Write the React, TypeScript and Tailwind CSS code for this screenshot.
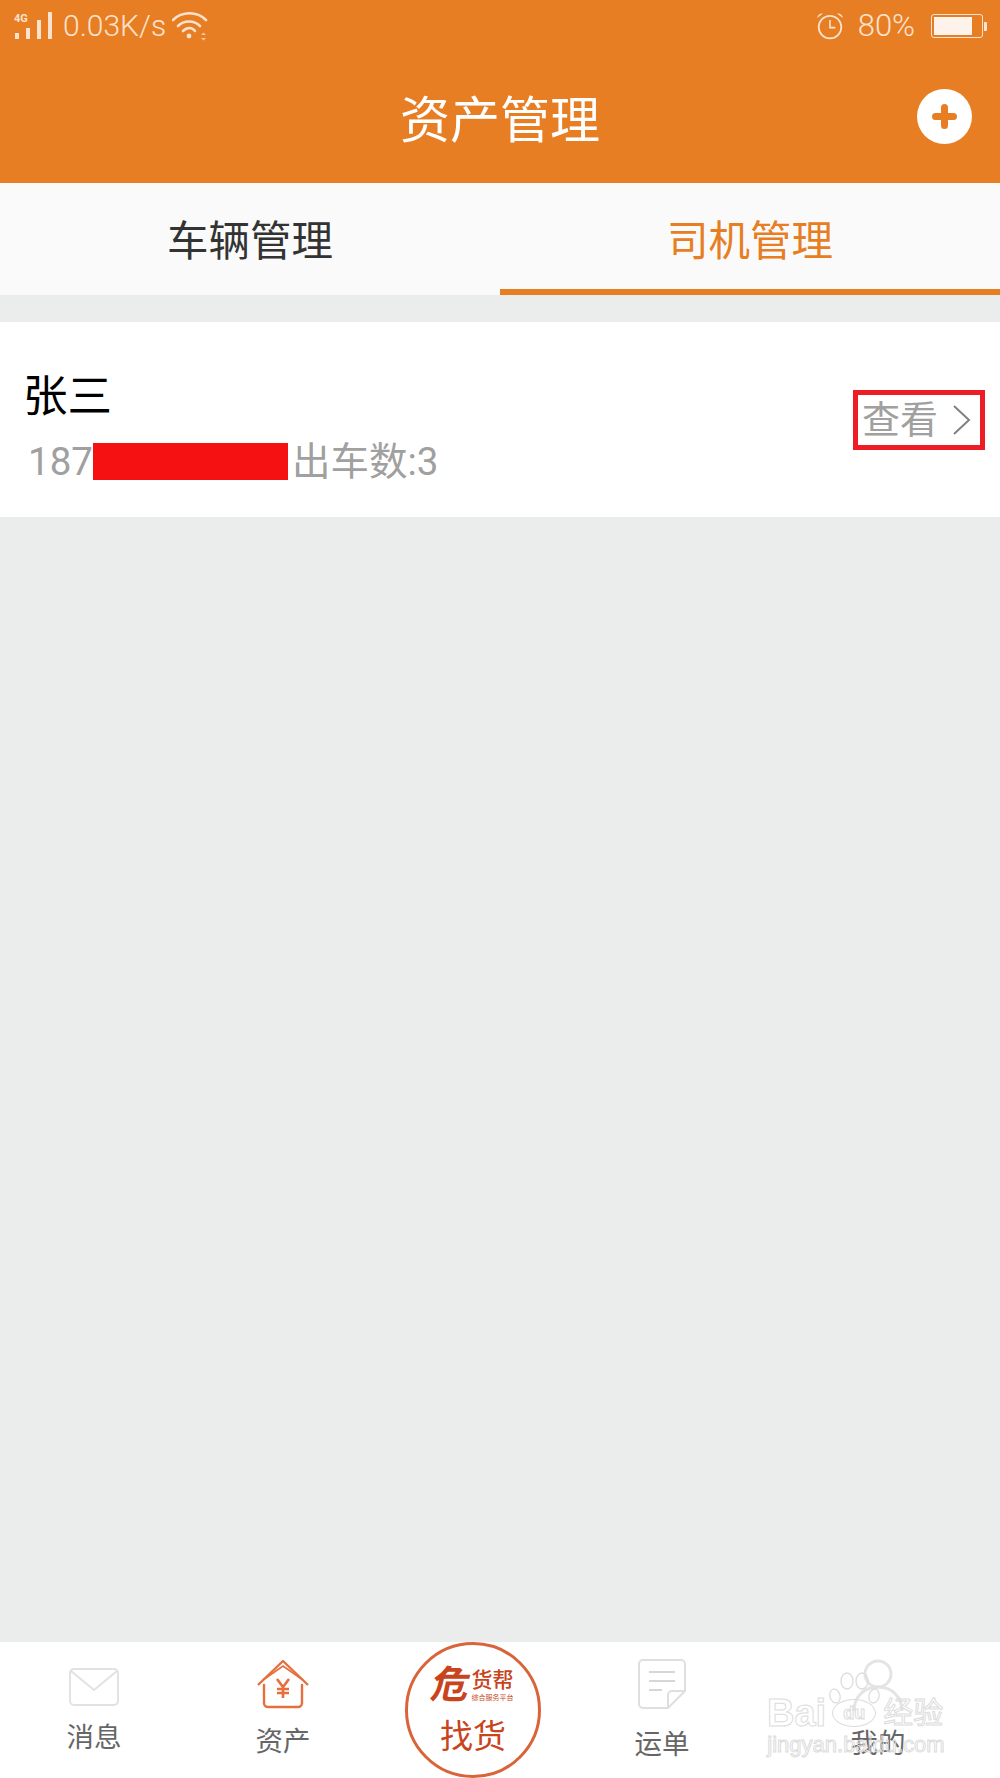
const cjk = "font-['Roboto','Noto_Sans_CJK_SC',sans-serif]";

function SignalIcon() {
  return (
    <svg width="40" height="28" viewBox="0 0 40 28" fill="#fbe3cf">
      <text x="0" y="10" fontSize="11" fontWeight="700" fontFamily="Roboto, sans-serif">4G</text>
      <rect x="1" y="21" width="4" height="6" />
      <rect x="12" y="16" width="4" height="11" />
      <rect x="23" y="8" width="4" height="19" />
      <rect x="34" y="0" width="4" height="27" />
    </svg>
  );
}

function WifiIcon() {
  return (
    <svg width="36" height="30" viewBox="0 0 36 30" fill="none" stroke="#fbe3cf" strokeWidth="2.6" strokeLinecap="round">
      <path d="M1 9C10 0 25 0 34 9" />
      <path d="M6 15C12 9 22 9 28 15" />
      <path d="M11 20C15 16 20 16 23 20" />
      <circle cx="17" cy="25" r="2.4" fill="#fbe3cf" stroke="none" />
      <path d="M29 24h5l-2.500-2.500zM29 27h5l-2.500 2.500z" fill="#f5c9a4" stroke="none" />
    </svg>
  );
}

function AlarmIcon() {
  return (
    <svg width="28" height="28" viewBox="0 0 26 26" fill="none" stroke="#fbe3cf" strokeWidth="1.600">
      <circle cx="13" cy="14" r="10.500" />
      <path d="M13 7.500v7h5" strokeWidth="1.500" />
      <path d="M1 5.500C1.500 2.500 4 1 6.500 1.500zM25 5.500C24.500 2.500 22 1 19.500 1.500z" fill="#fbe3cf" stroke="none" />
    </svg>
  );
}

function BatteryIcon() {
  return (
    <div className="flex items-center">
      <div className="flex h-[24px] w-[52px] rounded-[3px] border-[1.500px] border-[#fbe3cf] p-[2px]">
        <div className="h-full w-[38px] bg-[#fdf3ea]" />
      </div>
      <div className="ml-[1px] h-[9px] w-[3px] rounded-r-[1px] bg-[#fbe3cf]" />
    </div>
  );
}

function PlusButton() {
  return (
    <button className="flex h-[55px] w-[55px] items-center justify-center rounded-full bg-white">
      <svg width="25" height="25" viewBox="0 0 25 25" stroke="#e77e23" strokeWidth="7" strokeLinecap="round">
        <path d="M12.500 3.500v18M3.500 12.500h18" />
      </svg>
    </button>
  );
}

function MailIcon() {
  return (
    <svg width="50" height="38" viewBox="0 0 50 38" fill="none" stroke="#e2e2e2" strokeWidth="2">
      <rect x="1" y="1" width="48" height="36" rx="4" />
      <path d="M2 3l23 19L48 3" />
    </svg>
  );
}

function HouseIcon() {
  return (
    <svg width="52" height="50" viewBox="0 0 52 50" fill="none" stroke="#e66f3d" strokeWidth="2.400">
      <path d="M1 25L26 1l25 24" strokeLinejoin="round" />
      <path d="M6 20L26 6l20 14" strokeWidth="1.800" />
      <path d="M7 25v18a4 4 0 0 0 4 4h30a4 4 0 0 0 4-4V25" strokeLinecap="round" />
      <path d="M20 19l6 8 6-8M26 27v11M20 29h12M20 33h12" strokeWidth="2.600" />
    </svg>
  );
}

function WaybillIcon() {
  return (
    <svg width="48" height="50" viewBox="0 0 48 50" fill="none" stroke="#dfdfdf" strokeWidth="2">
      <path d="M30 49H5a4 4 0 0 1-4-4V5a4 4 0 0 1 4-4h38a4 4 0 0 1 4 4v27z" />
      <path d="M30 49V36a4 4 0 0 1 4-4h13" />
      <path d="M11 13h26M11 22h26M11 31h13" strokeWidth="2.200" stroke="#d6d6d6" />
    </svg>
  );
}

function PersonIcon() {
  return (
    <svg width="56" height="54" viewBox="0 0 56 54" fill="none" stroke="#e4e4e4" strokeWidth="3">
      <circle cx="28" cy="15" r="13" />
      <path d="M4 52c0-14 10-24 24-24s24 10 24 24" />
    </svg>
  );
}

function PawToes() {
  return (
    <svg width="52" height="34" viewBox="0 0 52 34" fill="none" stroke="#dcdcdc" strokeWidth="1.300">
      <ellipse cx="6" cy="24" rx="5" ry="7" transform="rotate(-15 6 24)" />
      <ellipse cx="18" cy="9" rx="6" ry="8" />
      <ellipse cx="33" cy="9" rx="6" ry="8" />
      <ellipse cx="45" cy="24" rx="5" ry="7" transform="rotate(15 45 24)" />
    </svg>
  );
}

function Watermark() {
  return (
    <div className="pointer-events-none absolute left-[767px] top-[1672px] w-[178px] text-transparent font-['Liberation_Sans','Noto_Sans_CJK_SC',sans-serif] [-webkit-text-stroke:1px_#dcdcdc]">
      <div className="pl-[62px]">
        <PawToes />
      </div>
      <div className="-mt-[8px] flex h-[30px] items-center text-[38px] font-bold leading-[30px]">
        <span>Bai</span>
        <span className="ml-[6px] flex h-[28px] w-[44px] items-center justify-center rounded-[50%] border border-[#dcdcdc] text-[18px]">du</span>
        <span className="ml-[7px] text-[30px] font-normal leading-[30px] whitespace-nowrap">经验</span>
      </div>
      <div className="mt-[6px] text-center text-[22px] leading-[22px] whitespace-nowrap">jingyan.baidu.com</div>
    </div>
  );
}

const navItems = [
  { label: "消息", icon: <MailIcon />, top: "pt-[26px]", gap: "mt-[14px]" },
  { label: "资产", icon: <HouseIcon />, top: "pt-[18px]", gap: "mt-[14px]" },
];

const navItemsRight = [
  { label: "运单", icon: <WaybillIcon />, top: "pt-[17px]", gap: "mt-[18px]" },
  { label: "我的", icon: <PersonIcon />, top: "pt-[17px]", gap: "mt-[13px]" },
];

function NavItem({ label, icon, top, gap }: { label: string; icon: React.ReactNode; top: string; gap: string }) {
  return (
    <div className={`flex flex-col items-center ${top}`}>
      {icon}
      <span className={`${gap} text-[27.500px] leading-[36px] text-[#666]`}>{label}</span>
    </div>
  );
}

export default function App() {
  return (
    <div className={`relative flex h-[1778px] w-[1000px] flex-col overflow-hidden bg-[#ebedec] ${cjk}`}>
      {/* header with status bar */}
      <div className="h-[183px] shrink-0 bg-[#e77e23]">
        <div className="flex h-[52px] items-center pl-[14px] pr-[13px] text-[30px] font-light text-[#fbe3cf]">
          <SignalIcon />
          <span className="ml-[9px] leading-[52px]">0.03K/s</span>
          <div className="ml-[6px]"><WifiIcon /></div>
          <div className="ml-auto"><AlarmIcon /></div>
          <span className="ml-[14px] text-[31px] leading-[52px]">80%</span>
          <div className="ml-[16px]"><BatteryIcon /></div>
        </div>
        <div className="flex h-[131px] items-start pt-[37px] pl-[83px] pr-[28px]">
          <div className="mt-[5px] flex-1 text-center text-[50px] leading-[54px] text-white">资产管理</div>
          <PlusButton />
        </div>
      </div>

      {/* tabs */}
      <div className="flex h-[112px] shrink-0 bg-[#fafafa]">
        <div className="flex flex-1 items-center justify-center pt-[7px] text-[41.500px] text-[#333]">车辆管理</div>
        <div className="flex flex-1 items-center justify-center border-b-[6px] border-[#e77e23] pt-[13px] text-[41.500px] text-[#e77e23]">司机管理</div>
      </div>

      {/* driver row */}
      <div className="mt-[27px] flex h-[195px] shrink-0 items-start justify-between bg-white pt-[46px] pl-[23px] pr-[15px]">
        <div>
          <div className="text-[44.500px] leading-[58px] text-black">张三</div>
          <div className="mt-[11px] flex items-center pl-[5px] text-[38.500px] leading-[50px] text-[#a0a0a0]">
            <span>187</span>
            <span className="mb-[2px] h-[37px] w-[195px] bg-[#f51111]" />
            <span className="ml-[4px]">出车数:3</span>
          </div>
        </div>
        <div className="mt-[22px] flex h-[60px] w-[132px] items-center border-[5px] border-[#ee1c25] pl-[4px] text-[38px] text-[#a0a0a0]">
          <span className="leading-[50px]">查看</span>
          <svg className="ml-[15px]" width="18" height="30" viewBox="0 0 18 30" fill="none" stroke="#808080" strokeWidth="2">
            <path d="M1 1l15 14L1 29" />
          </svg>
        </div>
      </div>

      {/* bottom nav */}
      <div className="mt-auto grid h-[136px] shrink-0 grid-cols-[188px_190px_190px_188px_244px] bg-white">
        {navItems.map((item) => (
          <NavItem key={item.label} {...item} />
        ))}
        <div className="flex justify-center">
          <div className="flex h-[136px] w-[136px] shrink-0 flex-col items-center rounded-full border-[3px] border-[#d9643a] pt-[18px] text-[#c8441c]">
            <div className="flex items-start leading-none">
              <span className="-skew-x-12 text-[38px] font-bold leading-[44px]">危</span>
              <div className="ml-[1px] mt-[4px] flex flex-col items-center">
                <span className="text-[21px] font-medium leading-[26px]">货帮</span>
                <span className="text-[7px] leading-[10px]">综合服务平台</span>
              </div>
            </div>
            <span className="mt-[9px] text-[33px] leading-[42px] text-[#c8441c]">找货</span>
          </div>
        </div>
        {navItemsRight.map((item) => (
          <NavItem key={item.label} {...item} />
        ))}
      </div>

      <Watermark />
    </div>
  );
}
